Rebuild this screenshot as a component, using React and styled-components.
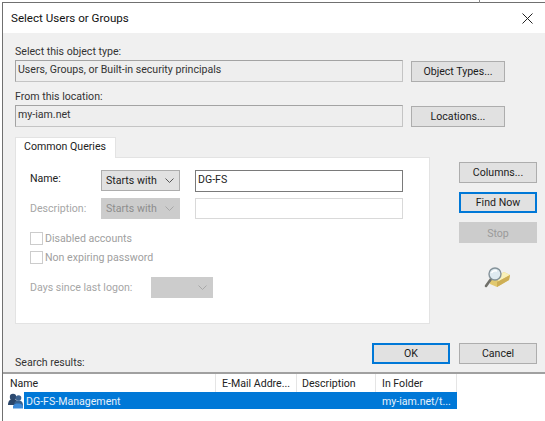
import React from "react";
import styled, { createGlobalStyle } from "styled-components";

const GlobalStyle = createGlobalStyle`
  html, body {
    margin: 0;
    padding: 0;
    background: #fff;
  }
  * {
    box-sizing: border-box;
  }
`;

const Page = styled.div`
  position: relative;
  width: 545px;
  height: 421px;
  padding-top: 2px;
  overflow: hidden;
  background: #fff;
  color: #1c1c1c;
  font-family: Roboto, "Noto Sans", sans-serif;
  font-size: 10.6px;

  &::after {
    content: "";
    position: absolute;
    left: 479px;
    top: 0;
    width: 1px;
    height: 3px;
    background: #8a8a8a;
  }
`;

const Window = styled.div`
  display: flex;
  flex-direction: column;
  height: 419px;
  margin-left: 2px;
  border-top: 1px solid #707070;
  border-left: 1px solid #707070;
`;

const TitleBar = styled.div`
  display: flex;
  align-items: center;
  justify-content: space-between;
  height: 30px;
  padding: 0 12px 0 8px;
  background: #fff;
  font-size: 11.6px;
  color: #111;
`;

const Body = styled.div`
  display: flex;
  flex-direction: column;
  height: 339px;
  padding: 10px 8px 0 12px;
  background: #f0f0f0;
`;

const FieldLabel = styled.div`
  height: 16px;
  line-height: 18px;
  color: #333;
`;

const FieldRow = styled.div`
  display: flex;
  align-items: center;
  gap: 8px;
  height: 22px;
  margin: 1px 0 ${(p) => p.$after}px;
`;

const ReadOnlyField = styled.div`
  width: 388px;
  height: 22px;
  padding-left: 2px;
  line-height: 18px;
  background: #eeeeee;
  border: 1px solid #a3a3a3;
  border-bottom-color: #c4c4c4;
  border-right-color: #c4c4c4;
  color: #333;
`;

const Button = styled.div`
  display: flex;
  align-items: center;
  justify-content: center;
  flex: none;
  width: ${(p) => p.$width}px;
  height: 21px;
  padding-top: ${(p) => (p.$disabled ? 2 : 0)}px;
  background: ${(p) => (p.$disabled ? "#cccccc" : "#e1e1e1")};
  border: ${(p) =>
    p.$disabled
      ? "1px solid #cccccc"
      : p.$primary
      ? "2px solid #0078d7"
      : "1px solid #adadad"};
  color: ${(p) => (p.$disabled ? "#9a9a9a" : "#1c1c1c")};
`;

const Tab = styled.div`
  position: relative;
  z-index: 1;
  width: 101px;
  height: 21px;
  margin-top: 3px;
  padding-left: 8px;
  line-height: 17px;
  background: #fff;
  border: 1px solid #e3e3e3;
  border-bottom: none;
  color: #222;
`;

const QueryArea = styled.div`
  display: flex;
  align-items: flex-start;
  gap: 29px;
  margin-top: -1px;
`;

const Panel = styled.div`
  display: flex;
  flex-direction: column;
  width: 415px;
  height: 167px;
  padding: 12px 0 0 14px;
  background: #fff;
  border: 1px solid #e3e3e3;
`;

const QueryRow = styled.div`
  display: flex;
  align-items: center;
  height: 22px;
  margin-top: ${(p) => p.$before || 0}px;
  margin-bottom: ${(p) => p.$after || 0}px;
`;

const QueryLabel = styled.div`
  width: ${(p) => p.$width}px;
  padding-bottom: ${(p) => p.$raise || 0}px;
  color: ${(p) => (p.$disabled ? "#a6a6a6" : "#222")};
`;

const Select = styled.div`
  display: flex;
  align-items: center;
  justify-content: space-between;
  width: ${(p) => p.$width}px;
  height: 21px;
  padding: 0 5px 0 4px;
  background: ${(p) => (p.$disabled ? "#cccccc" : "#e1e1e1")};
  border: 1px solid ${(p) => (p.$disabled ? "#cccccc" : "#adadad")};
  color: ${(p) => (p.$disabled ? "#8c8c8c" : "#222")};
`;

const TextInput = styled.div`
  width: 208px;
  height: ${(p) => (p.$disabled ? 21 : 22)}px;
  margin-left: 15px;
  padding-left: 2px;
  line-height: 17px;
  background: #fff;
  border: 1px solid ${(p) => (p.$disabled ? "#d9d9d9" : "#7a7a7a")};
  color: #222;
`;

const CheckRow = styled.div`
  display: flex;
  align-items: center;
  gap: 2px;
  height: 13px;
  margin-bottom: 6px;
  color: #a0a0a0;
`;

const CheckBox = styled.span`
  width: 13px;
  height: 13px;
  background: #fff;
  border: 1px solid #cccccc;
`;

const SideColumn = styled.div`
  display: flex;
  flex-direction: column;
  align-items: center;
  gap: 9px;
  width: 78px;
  padding-top: 5px;
`;

const SideIcon = styled.div`
  margin-top: 15px;
  margin-right: 2px;
  line-height: 0;
`;

const Footer = styled.div`
  display: flex;
  justify-content: space-between;
  height: 30px;
  margin-top: 19px;
`;

const ResultsLabel = styled(FieldLabel)`
  align-self: flex-end;
  margin-bottom: 2px;
`;

const FooterButtons = styled.div`
  display: flex;
  gap: 9px;
`;

const Results = styled.div`
  flex: 1;
  background: #fff;
  border-top: 2px solid #a0a0a0;
`;

const HeaderRow = styled.div`
  display: grid;
  grid-template-columns: 213px 81px 79px 81px;
  width: 454px;
  height: 18px;
`;

const HeaderCell = styled.div`
  padding-left: ${(p) => p.$pad}px;
  line-height: 20px;
  white-space: nowrap;
  overflow: hidden;
  border-right: 1px solid #e5e5e5;
  color: #222;
`;

const ResultRow = styled.div`
  display: flex;
  align-items: center;
  width: 454px;
  height: 17px;
  padding-left: 5px;
`;

const SelectedBar = styled.div`
  display: grid;
  grid-template-columns: 192px 81px 79px 81px;
  width: 433px;
  height: 17px;
  background: #0078d7;
  color: #e6f1fb;
  line-height: 19px;
`;

const NameCell = styled.div`
  padding-left: 2px;
  white-space: nowrap;
`;

const FolderCell = styled.div`
  grid-column: 4;
  padding-left: 6px;
  white-space: nowrap;
`;

const CloseIcon = () => (
  <svg width="11" height="11" viewBox="0 0 11 11">
    <path d="M.5.5l10 10M10.5.5l-10 10" stroke="#222" strokeWidth="1" fill="none" />
  </svg>
);

const Chevron = ({ color }) => (
  <svg width="9" height="5" viewBox="0 0 9 5">
    <path d="M.5.5l4 4 4-4" stroke={color} strokeWidth="1" fill="none" />
  </svg>
);

const SearchTray = () => (
  <svg width="27" height="21" viewBox="0 0 27 21">
    <path d="M6 13L20 5l6 3-1 5-12 7-7-3z" fill="#e2c96e" />
    <path d="M10 11l10-6 6 3-11 6z" fill="#f9f0b8" />
    <path d="M13 20l12-7 1-5-11 6-2 1z" fill="#cdae55" />
    <path d="M7 12L2 19" stroke="#70706a" strokeWidth="2.6" strokeLinecap="round" />
    <circle cx="11" cy="7" r="6" fill="#dfeaf0" stroke="#84929a" strokeWidth="1.4" />
    <path d="M7.500 6c.8-1.800 3-2.600 5.500-2" stroke="#fff" strokeWidth="1.4" fill="none" />
  </svg>
);

const GroupIcon = () => (
  <svg width="16" height="16" viewBox="0 0 16 16">
    <circle cx="5" cy="4" r="3.200" fill="#2d4a70" />
    <path d="M0 12c0-4 2-6 5-6s5 2 5 6z" fill="#2b4669" />
    <circle cx="10.500" cy="5" r="2.800" fill="#3b6291" />
    <path d="M6 13c0-4 1.500-5.500 4.500-5.500S15 9 15 13z" fill="#35608f" />
    <path d="M5 15.500h10v-2.500c-1-2-3-2.500-5-2.500s-4 .5-5 2.500z" fill="#3f8ad6" />
  </svg>
);

const App = () => (
  <Page>
    <GlobalStyle />
    <Window>
      <TitleBar>
        <span>Select Users or Groups</span>
        <CloseIcon />
      </TitleBar>
      <Body>
        <FieldLabel>Select this object type:</FieldLabel>
        <FieldRow $after={6}>
          <ReadOnlyField>Users, Groups, or Built-in security principals</ReadOnlyField>
          <Button $width={94}>Object Types...</Button>
        </FieldRow>
        <FieldLabel>From this location:</FieldLabel>
        <FieldRow $after={7}>
          <ReadOnlyField>my-iam.net</ReadOnlyField>
          <Button $width={94}>Locations...</Button>
        </FieldRow>
        <Tab>Common Queries</Tab>
        <QueryArea>
          <Panel>
            <QueryRow $after={6}>
              <QueryLabel $width={71} $raise={4}>Name:</QueryLabel>
              <Select $width={79}>
                Starts with
                <Chevron color="#555" />
              </Select>
              <TextInput>DG-FS</TextInput>
            </QueryRow>
            <QueryRow $after={12}>
              <QueryLabel $width={71} $disabled>Description:</QueryLabel>
              <Select $width={79} $disabled>
                Starts with
                <Chevron color="#a8a8a8" />
              </Select>
              <TextInput $disabled />
            </QueryRow>
            <CheckRow>
              <CheckBox />
              Disabled accounts
            </CheckRow>
            <CheckRow>
              <CheckBox />
              Non expiring password
            </CheckRow>
            <QueryRow $before={7}>
              <QueryLabel $width={121} $disabled>Days since last logon:</QueryLabel>
              <Select $width={62} $disabled>
                <span />
                <Chevron color="#a8a8a8" />
              </Select>
            </QueryRow>
          </Panel>
          <SideColumn>
            <Button $width={78}>Columns...</Button>
            <Button $width={78} $primary>Find Now</Button>
            <Button $width={78} $disabled>Stop</Button>
            <SideIcon>
              <SearchTray />
            </SideIcon>
          </SideColumn>
        </QueryArea>
        <Footer>
          <ResultsLabel>Search results:</ResultsLabel>
          <FooterButtons>
            <Button $width={78} $primary>OK</Button>
            <Button $width={78}>Cancel</Button>
          </FooterButtons>
        </Footer>
      </Body>
      <Results>
        <HeaderRow>
          <HeaderCell $pad={7}>Name</HeaderCell>
          <HeaderCell $pad={6}>E-Mail Addre...</HeaderCell>
          <HeaderCell $pad={5}>Description</HeaderCell>
          <HeaderCell $pad={6}>In Folder</HeaderCell>
        </HeaderRow>
        <ResultRow>
          <GroupIcon />
          <SelectedBar>
            <NameCell>DG-FS-Management</NameCell>
            <FolderCell>my-iam.net/t...</FolderCell>
          </SelectedBar>
        </ResultRow>
      </Results>
    </Window>
  </Page>
);

export default App;
